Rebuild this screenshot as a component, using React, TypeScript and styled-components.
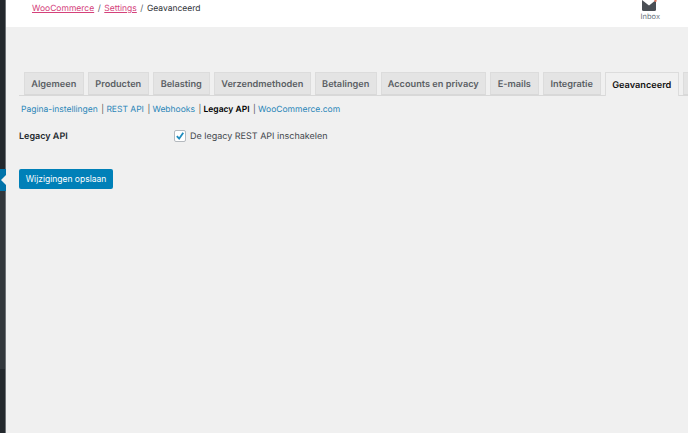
import * as React from "react"
import styled, { createGlobalStyle } from "styled-components"

const GlobalStyle = createGlobalStyle`
    html, body {
        margin: 0;
        padding: 0;
        height: 100%;
        overflow: hidden;
        background: #f0f0f0;
    }
    #root {
        height: 100%;
    }
`

const tabs = [
    { label: "Algemeen", width: 59.5 },
    { label: "Producten", width: 60.5 },
    { label: "Belasting", width: 56.5 },
    { label: "Verzendmethoden", width: 96.5 },
    { label: "Betalingen", width: 61.5 },
    { label: "Accounts en privacy", width: 104.5 },
    { label: "E-mails", width: 48.5 },
    { label: "Integratie", width: 57.5 },
    { label: "Geavanceerd", width: 73.5, active: true },
    { label: "", width: 40 },
]

const sections = ["Pagina-instellingen", "REST API", "Webhooks", "Legacy API", "WooCommerce.com"]

const App: React.FC = () => (
    <Page>
        <GlobalStyle />
        <Sidebar>
            <SidebarArrow />
        </Sidebar>
        <Main>
            <Header>
                <Breadcrumbs>
                    <Crumb href="#">WooCommerce</Crumb>
                    <CrumbSep>/</CrumbSep>
                    <Crumb href="#">Settings</Crumb>
                    <CrumbSep>/</CrumbSep>
                    <span>Geavanceerd</span>
                </Breadcrumbs>
                <InboxButton>
                    <InboxIcon width="16" height="11" viewBox="0 0 16 11">
                        <path d="M1 0h14v9.5a1.5 1.5 0 0 1-1.5 1.5h-11A1.5 1.5 0 0 1 1 9.5z" fill="#4a4f55" />
                        <path d="M1 0l7 5.5L15 0z" fill="#fff" />
                        <circle cx="14.5" cy="0.8" r="1.2" fill="#d9775f" />
                    </InboxIcon>
                    Inbox
                </InboxButton>
            </Header>
            <TabBar>
                {tabs.map((t, i) => (
                    <Tab key={i} $active={t.active} $width={t.width}>
                        {t.label}
                    </Tab>
                ))}
            </TabBar>
            <SubNav>
                {sections.map((s, i) => (
                    <SubNavItem key={s} $first={i === 0}>
                        {s === "Legacy API" ? <strong>{s}</strong> : <SubNavLink href="#">{s}</SubNavLink>}
                    </SubNavItem>
                ))}
            </SubNav>
            <SettingRow>
                <SettingLabel>Legacy API</SettingLabel>
                <CheckLabel>
                    <CheckBox>
                        <svg width="10" height="10" viewBox="0 0 12 12">
                            <path d="M2.2 6.2l2.8 3 4.9-7" fill="none" stroke="#1e8cbe" strokeWidth="2.2" />
                        </svg>
                    </CheckBox>
                    De legacy REST API inschakelen
                </CheckLabel>
            </SettingRow>
            <SaveButton>Wijzigingen opslaan</SaveButton>
        </Main>
    </Page>
)

export default App

const Page = styled.div`
    display: flex;
    height: 433px;
    width: 688px;
    overflow: hidden;
    font-family: Inter, "Liberation Sans", Arial, sans-serif;
    font-size: 9px;
    color: #44484e;
    text-rendering: geometricPrecision;
`

const Sidebar = styled.div`
    position: relative;
    flex: 0 0 6px;
    background: linear-gradient(#23282d 0, #23282d 190px, #32373c 190px, #32373c 369px, #23282d 369px);
    box-shadow: inset -1px 0 #6e7276;
`

const SidebarArrow = styled.div`
    position: absolute;
    top: 169px;
    left: 0;
    width: 6px;
    height: 22px;
    background: #0073aa;
    &:after {
        content: "";
        position: absolute;
        right: 0;
        top: 6px;
        border-top: 5px solid transparent;
        border-bottom: 5px solid transparent;
        border-right: 5px solid #f0f0f0;
    }
`

const Main = styled.div`
    flex: 1;
    min-width: 0;
    background: #f0f0f0;
`

const Header = styled.div`
    height: 27px;
    background: #fff;
    display: flex;
    justify-content: space-between;
    padding: 0 28px 0 26px;
    box-sizing: border-box;
`

const Breadcrumbs = styled.div`
    display: flex;
    align-items: baseline;
    padding-top: 3px;
    line-height: 12px;
    font-size: 8.5px;
    color: #2f3338;
`

const Crumb = styled.a`
    color: #d4417a;
    text-decoration: underline;
`

const CrumbSep = styled.span`
    margin: 0 3.5px;
    color: #555d66;
`

const InboxButton = styled.div`
    display: flex;
    flex-direction: column;
    align-items: center;
    font-size: 7.5px;
    line-height: 10px;
    color: #6c7781;
    gap: 1px;
`

const InboxIcon = styled.svg`
    display: block;
    margin-right: 2px;
`

const TabBar = styled.div`
    display: flex;
    gap: 4.5px;
    margin: 45px 0 0 13px;
    padding-left: 5px;
    height: 23px;
    border-bottom: 1px solid #d8d8d8;
`

const Tab = styled.div<{ $active?: boolean; $width: number }>`
    flex: 0 0 ${p => p.$width}px;
    height: ${p => (p.$active ? 24 : 23)}px;
    box-sizing: border-box;
    display: flex;
    align-items: center;
    justify-content: center;
    padding-top: 1px;
    border: 1px solid #dcdcdc;
    border-bottom: ${p => (p.$active ? "none" : "1px solid #d8d8d8")};
    background: ${p => (p.$active ? "#f0f0f0" : "#e4e4e4")};
    color: ${p => (p.$active ? "#111" : "#5b5f64")};
    font-weight: 600;
    font-size: 9.2px;
`

const SubNav = styled.ul`
    display: flex;
    margin: 0;
    padding: 8px 0 0 15px;
    list-style: none;
    line-height: 12px;
    font-size: 8.5px;
`

const SubNavItem = styled.li<{ $first?: boolean }>`
    color: #555;
    &:before {
        content: "|";
        display: ${p => (p.$first ? "none" : "inline")};
        margin: 0 2.25px 0 3.5px;
    }
    strong {
        color: #000;
        font-weight: 600;
    }
`

const SubNavLink = styled.a`
    color: #2a86b8;
    text-decoration: none;
`

const SettingRow = styled.div`
    display: flex;
    align-items: center;
    margin-top: 14px;
    padding-left: 13px;
`

const SettingLabel = styled.div`
    flex: 0 0 155px;
    font-weight: 600;
    color: #23282d;
`

const CheckLabel = styled.label`
    display: flex;
    align-items: center;
    gap: 4px;
`

const CheckBox = styled.span`
    width: 12px;
    height: 12px;
    box-sizing: border-box;
    display: flex;
    align-items: center;
    justify-content: center;
    border: 1px solid #b4b9be;
    border-radius: 2px;
    background: #fff;
`

const SaveButton = styled.button`
    display: block;
    margin: 27px 0 0 13px;
    width: 94px;
    height: 20px;
    padding: 0;
    border: none;
    border-radius: 2px;
    background: #0080b8;
    color: #fff;
    font: 8.5px Inter, "Liberation Sans", Arial, sans-serif;
`
